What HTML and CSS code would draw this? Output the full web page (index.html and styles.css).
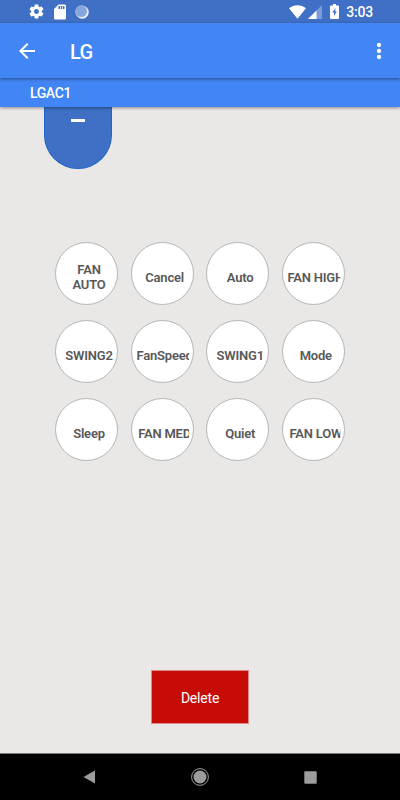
FILE: index.html
```html
<!DOCTYPE html>
<html lang="en">
<head>
    <meta charset="UTF-8">
    <meta name="viewport" content="width=device-width, initial-scale=1.0">
    <title>LG Remote</title>
    <link rel="stylesheet" href="styles.css">
</head>
<body>
    <div class="screen">
        <div class="status-bar">
            <div class="status-left">
                <svg width="17" height="17" viewBox="0 0 24 24"><path fill="#fff" d="M19.43 12.98c.04-.32.07-.64.07-.98s-.03-.66-.07-.98l2.11-1.65c.19-.15.24-.42.12-.64l-2-3.46c-.12-.22-.39-.3-.61-.22l-2.49 1c-.52-.4-1.08-.73-1.69-.98l-.38-2.65C14.46 2.18 14.25 2 14 2h-4c-.25 0-.46.18-.49.42l-.38 2.65c-.61.25-1.17.59-1.69.98l-2.49-1c-.23-.09-.49 0-.61.22l-2 3.46c-.13.22-.07.49.12.64l2.11 1.65c-.04.32-.07.65-.07.98s.03.66.07.98l-2.11 1.65c-.19.15-.24.42-.12.64l2 3.46c.12.22.39.3.61.22l2.49-1c.52.4 1.08.73 1.69.98l.38 2.65c.03.24.24.42.49.42h4c.25 0 .46-.18.49-.42l.38-2.65c.61-.25 1.17-.59 1.69-.98l2.49 1c.23.09.49 0 .61-.22l2-3.46c.12-.22.07-.49-.12-.64l-2.11-1.65zM12 15.500c-1.930 0-3.500-1.570-3.500-3.500s1.570-3.500 3.500-3.500 3.500 1.570 3.500 3.500-1.570 3.500-3.500 3.500z"/></svg>
                <svg width="18" height="18" viewBox="0 0 24 24"><path fill="#fff" d="M18 2h-8L4.020 8 4 20c0 1.100.9 2 2 2h12c1.100 0 2-.9 2-2V4c0-1.100-.9-2-2-2zm-6 6h-2V4h2v4zm3 0h-2V4h2v4zm3 0h-2V4h2v4z"/></svg>
                <svg width="14" height="14" viewBox="0 0 14 14"><circle cx="7.200" cy="7.200" r="6.500" fill="#eef3fb"/><circle cx="6.300" cy="6.300" r="5.800" fill="#86a5dc"/><circle cx="6.300" cy="6.300" r="5.600" fill="none" stroke="#aabfe7" stroke-width=".8" stroke-dasharray="1.500 1"/></svg>
            </div>
            <div class="status-right">
                <svg width="17" height="14" viewBox="0 0 17 14"><path fill="#fff" d="M0 3.200C5-.8 12-.8 17 3.200L8.500 13.800z"/></svg>
                <svg class="signal" width="14" height="14" viewBox="0 0 14 14"><path fill="#7c9cd8" d="M14 0v14H0z"/><path fill="#fff" d="M8.500 5.500V14H0z"/></svg>
                <svg class="battery" width="9" height="15" viewBox="0 0 9 15"><path fill="#fff" d="M3 0h3v1.500h2q1 0 1 1V14q0 1-1 1H1q-1 0-1-1V2.500q0-1 1-1h2z"/><path fill="#3f70c5" d="M5.500 4L2.200 8.500h1.900v3.500L6.800 7.500H5.200z"/></svg>
                <span class="clock">3:03</span>
            </div>
        </div>

        <div class="app-bar">
            <svg width="24" height="24" viewBox="0 0 24 24"><path fill="#fff" d="M20 11H7.830l5.590-5.590L12 4l-8 8 8 8 1.410-1.410L7.830 13H20v-2z"/></svg>
            <h1>LG</h1>
            <svg class="more" width="6" height="18" viewBox="0 0 6 18"><g fill="#fff"><circle cx="3" cy="3" r="2.150"/><circle cx="3" cy="9" r="2.150"/><circle cx="3" cy="15" r="2.150"/></g></svg>
        </div>

        <div class="device-bar">LGAC1</div>

        <div class="content">
            <div class="temp-control"><span class="minus"></span></div>

            <div class="button-grid">
                <div class="button two-line"><span>FAN<br>AUTO</span></div>
                <div class="button"><span>Cancel</span></div>
                <div class="button"><span>Auto</span></div>
                <div class="button"><span>FAN HIGH</span></div>
                <div class="button"><span>SWING2</span></div>
                <div class="button"><span>FanSpeed</span></div>
                <div class="button"><span>SWING1</span></div>
                <div class="button"><span>Mode</span></div>
                <div class="button"><span>Sleep</span></div>
                <div class="button"><span>FAN MED</span></div>
                <div class="button"><span>Quiet</span></div>
                <div class="button"><span>FAN LOW</span></div>
            </div>

            <div class="delete-button">Delete</div>
        </div>

        <div class="nav-bar">
            <svg width="13" height="14" viewBox="0 0 13 14"><path fill="#9c9c9c" d="M12 .5v13L.5 7z"/></svg>
            <svg width="18" height="18" viewBox="0 0 18 18"><circle cx="9" cy="9" r="8.400" fill="none" stroke="#9c9c9c" stroke-width="1"/><circle cx="9" cy="9" r="6.500" fill="#9c9c9c"/></svg>
            <svg width="13" height="13" viewBox="0 0 13 13"><rect x=".3" y=".3" width="12.400" height="12.400" rx="1" fill="#9c9c9c"/></svg>
        </div>
    </div>
</body>
</html>
```
FILE: styles.css
```css
body {
    font-family: Roboto, 'Liberation Sans', sans-serif;
    margin: 0;
    padding: 0;
}

svg {
    display: block;
    flex: none;
}

.screen {
    display: flex;
    flex-direction: column;
    width: 400px;
    height: 800px;
    overflow: hidden;
    background-color: #e9e8e6;
}

.status-bar {
    display: flex;
    justify-content: space-between;
    height: 23px;
    padding: 0 27px 0 28px;
    background-color: #3f70c5;
}

.status-left,
.status-right {
    display: flex;
    align-items: center;
}

.status-left {
    gap: 6px;
}

.signal {
    margin-left: 2px;
}

.battery {
    margin-left: 8px;
}

.clock {
    margin-left: 7px;
    padding-top: 1px;
    color: #fff;
    font-size: 14px;
    font-weight: 500;
    line-height: 16px;
    letter-spacing: -0.2px;
}

.app-bar {
    display: flex;
    align-items: center;
    height: 55px;
    padding: 0 18.5px 0 15px;
    background-color: #4285f4;
    box-shadow: 0 1px 3px rgba(0, 0, 0, 0.45);
    z-index: 2;
}

h1 {
    margin: 2px 0 0 31px;
    color: #fff;
    font-size: 20px;
    font-weight: 500;
    letter-spacing: -0.7px;
}

.more {
    margin-left: auto;
}

.device-bar {
    height: 29px;
    padding-left: 30px;
    background-color: #4285f4;
    box-shadow: 0 1px 3px rgba(0, 0, 0, 0.4);
    color: #fff;
    font-size: 14px;
    font-weight: 500;
    line-height: 31px;
    letter-spacing: -0.4px;
    z-index: 1;
}

.content {
    display: flex;
    flex-direction: column;
    flex: 1;
}

.temp-control {
    box-sizing: border-box;
    width: 68px;
    height: 62px;
    margin-left: 44px;
    padding-top: 12px;
    background-color: #3f70c5;
    border: 1px solid #1e66c5;
    border-top: none;
    border-radius: 0 0 34px 34px;
}

.minus {
    display: block;
    width: 14px;
    height: 3px;
    margin: 0 auto;
    background-color: #fff;
}

.button-grid {
    display: grid;
    grid-template-columns: repeat(4, 63px);
    gap: 15px 12.6px;
    margin: 73px 0 0 55px;
}

.button {
    display: flex;
    align-items: center;
    box-sizing: border-box;
    height: 63px;
    padding: 7px 0 0 4px;
    background-color: #fff;
    border: 1px solid #b5b5b5;
    border-radius: 50%;
}

.two-line {
    padding-top: 6px;
}

/* long labels are cut off before the edge of the circle */
.button span {
    flex: none;
    width: 58px;
    clip-path: inset(0 4.5px 0 0);
    color: #585858;
    font-size: 13px;
    font-weight: 600;
    line-height: 15px;
    letter-spacing: -0.2px;
    text-align: center;
    white-space: nowrap;
}

.delete-button {
    box-sizing: border-box;
    width: 98px;
    height: 54px;
    margin: auto auto 29px 151px;
    background-color: #c60c04;
    border: 1px solid #d98c89;
    color: #fff;
    font-size: 14px;
    line-height: 54px;
    letter-spacing: -0.2px;
    text-align: center;
}

.nav-bar {
    display: flex;
    align-items: center;
    justify-content: space-between;
    box-sizing: border-box;
    height: 47px;
    padding: 0 83px;
    background-color: #000;
    border-top: 1px solid #777;
}
```
